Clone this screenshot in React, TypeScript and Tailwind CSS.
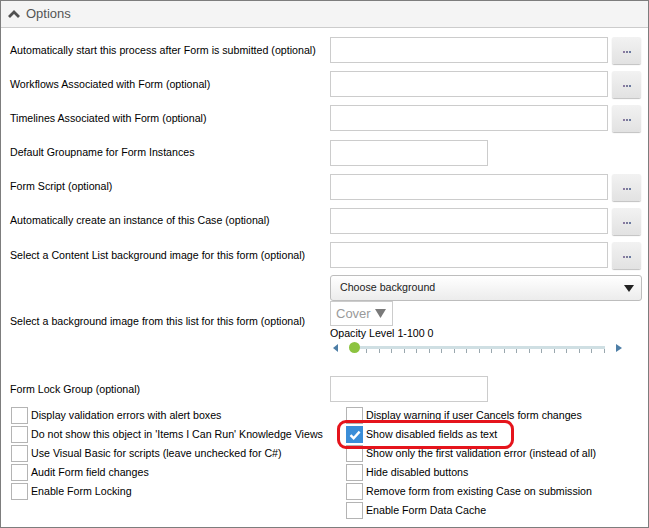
import type { ReactNode } from 'react'

const font = { fontFamily: '"Liberation Sans", Arial, sans-serif' }

function TextBox({ wide = true }: { wide?: boolean }) {
  return (
    <div
      className={`h-[26px] shrink-0 border border-[#cccccc] bg-white ${wide ? 'w-[278px]' : 'w-[158px]'}`}
    />
  )
}

function DotsButton() {
  return (
    <button className="ml-[4px] mt-[1px] flex h-[27px] w-[29px] shrink-0 items-center justify-center gap-[1px] rounded-[2px] bg-gradient-to-b from-[#f2f2f2] to-[#e2e2e2] pt-[3px] shadow-[0_1px_1px_rgba(0,0,0,0.25)]">
      <span className="h-[2px] w-[2px] bg-[#8a7aa0]" />
      <span className="h-[2px] w-[2px] bg-[#7a7a9a]" />
      <span className="h-[2px] w-[2px] bg-[#6a7aa0]" />
    </button>
  )
}

function Row({ label, children }: { label: string; children: ReactNode }) {
  return (
    <div className="flex h-[26px] items-center">
      <div className="w-[329px] shrink-0 whitespace-nowrap pl-[9px] pt-[1px] text-[10.65px] text-black">{label}</div>
      {children}
    </div>
  )
}

function Check({ label, checked = false }: { label: string; checked?: boolean }) {
  return (
    <div className="flex h-[19px] items-center">
      {checked ? (
        <div className="flex h-[17px] w-[17px] items-center justify-center bg-[#3b8ed8]">
          <svg width="12" height="10" viewBox="0 0 12 10">
            <path d="M1.5 5.2 L4.6 8.2 L10.6 1.6" fill="none" stroke="white" strokeWidth="2.4" />
          </svg>
        </div>
      ) : (
        <div className="h-[17px] w-[17px] border border-[#b4b4b4] bg-white" />
      )}
      <span className="ml-[3px] whitespace-nowrap text-[10.65px] text-black">{label}</span>
    </div>
  )
}

function Slider() {
  const ticks = Array.from({ length: 20 }, (_, i) => i)
  return (
    <div className="flex h-[14px] items-center">
      <svg width="8" height="8" viewBox="0 0 8 8" className="ml-[2px]">
        <path d="M6 0 L6 8 L1 4 Z" fill="#4d7ea6" />
      </svg>
      <div className="relative ml-[14px] h-[14px] w-[251px]">
        <div className="absolute left-0 right-0 top-[5px] h-[3px] bg-[#cfdfe3]" />
        <div className="absolute left-[12px] right-0 top-[8px] flex justify-between">
          {ticks.map((t) => (
            <div key={t} className="h-[4px] w-[1px] bg-[#9aa7ae]" />
          ))}
        </div>
        <div className="absolute -left-[5px] top-[1px] h-[11px] w-[11px] rounded-full bg-[#8cc340]" />
      </div>
      <svg width="8" height="8" viewBox="0 0 8 8" className="ml-[10px]">
        <path d="M1 0 L1 8 L7 4 Z" fill="#4d7ea6" />
      </svg>
    </div>
  )
}

export default function App() {
  return (
    <div style={font} className="h-[528px] w-[649px] border border-[#7d7d7d] bg-white">
      <div className="flex h-[27px] items-center border-b border-[#cccccc] bg-[#f4f4f4] pl-[6px]">
        <svg width="14" height="10" viewBox="0 0 14 10">
          <path d="M2 8 L7 3 L12 8" fill="none" stroke="#505050" strokeWidth="2.8" />
        </svg>
        <span className="ml-[5px] text-[13px] text-[#555555]">Options</span>
      </div>

      <div className="flex flex-col gap-[8.2px] pt-[9px]">
        <Row label="Automatically start this process after Form is submitted (optional)">
          <TextBox />
          <DotsButton />
        </Row>
        <Row label="Workflows Associated with Form (optional)">
          <TextBox />
          <DotsButton />
        </Row>
        <Row label="Timelines Associated with Form (optional)">
          <TextBox />
          <DotsButton />
        </Row>
        <Row label="Default Groupname for Form Instances">
          <TextBox wide={false} />
        </Row>
        <Row label="Form Script (optional)">
          <TextBox />
          <DotsButton />
        </Row>
        <Row label="Automatically create an instance of this Case (optional)">
          <TextBox />
          <DotsButton />
        </Row>
        <Row label="Select a Content List background image for this form (optional)">
          <TextBox />
          <DotsButton />
        </Row>
      </div>

      <div className="flex h-[108px] items-center">
        <div className="w-[329px] shrink-0 whitespace-nowrap pl-[9px] text-[10.65px] text-black">
          Select a background image from this list for this form (optional)
        </div>
        <div className="flex h-full flex-col pt-[7px]">
          <div className="flex h-[26px] w-[312px] items-center justify-between rounded-[3px] border border-[#bdbdbd] bg-gradient-to-b from-white to-[#ececec] pl-[9px] pr-[7px]">
            <span className="text-[10.65px] text-[#222222]">Choose background</span>
            <svg width="10" height="7" viewBox="0 0 10 7">
              <path d="M0 0 L10 0 L5 7 Z" fill="#222222" />
            </svg>
          </div>
          <div className="flex h-[25px] w-[63px] items-center justify-between border border-[#cccccc] pl-[5px] pr-[6px]">
            <span className="text-[13px] text-[#9a9a9a]">Cover</span>
            <svg width="11" height="9" viewBox="0 0 11 9">
              <path d="M0 0 L11 0 L5.5 9 Z" fill="#7a7a7a" />
            </svg>
          </div>
          <div className="mt-[1px] text-[10.65px] leading-[13px] text-black">Opacity Level 1-100 0</div>
          <div className="mt-[1px]">
            <Slider />
          </div>
        </div>
      </div>

      <Row label="Form Lock Group (optional)">
        <TextBox wide={false} />
      </Row>

      <div className="mt-[4px] flex">
        <div className="flex w-[335px] shrink-0 flex-col pl-[10px]">
          <Check label="Display validation errors with alert boxes" />
          <Check label="Do not show this object in 'Items I Can Run' Knowledge Views" />
          <Check label="Use Visual Basic for scripts (leave unchecked for C#)" />
          <Check label="Audit Form field changes" />
          <Check label="Enable Form Locking" />
        </div>
        <div className="flex flex-col pl-[10px]">
          <Check label="Display warning if user Cancels form changes" />
          <div className="relative">
            <Check label="Show disabled fields as text" checked />
            <div className="absolute -left-[9px] -top-[5px] h-[29px] w-[177px] rounded-[9px] border-[3px] border-[#e5141c]" />
          </div>
          <Check label="Show only the first validation error (instead of all)" />
          <Check label="Hide disabled buttons" />
          <Check label="Remove form from existing Case on submission" />
          <Check label="Enable Form Data Cache" />
        </div>
      </div>
    </div>
  )
}
